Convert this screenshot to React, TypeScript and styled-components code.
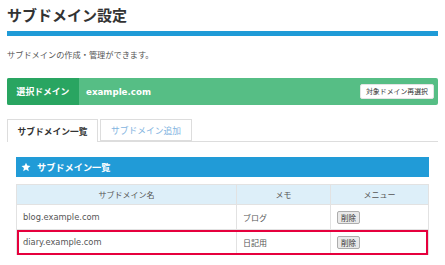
import React from "react";
import styled, { createGlobalStyle } from "styled-components";

const GlobalStyle = createGlobalStyle`
  html, body { margin: 0; padding: 0; background: #fff; }
  body {
    font-family: "DejaVu Sans", "Noto Sans CJK JP", sans-serif;
    color: #555;
    -webkit-font-smoothing: antialiased;
  }
`;

const Page = styled.div`
  width: 445px;
  height: 265px;
  box-sizing: border-box;
  padding: 0 7px;
  overflow: hidden;
`;

const Title = styled.h1`
  margin: 0;
  padding-top: 5px;
  font-family: "Noto Sans CJK JP", sans-serif;
  font-size: 15px;
  line-height: 20px;
  font-weight: 700;
  color: #333;
`;

const TitleBar = styled.div`
  margin-top: 6px;
  height: 5px;
  background: #1f9bd7;
`;

const Lead = styled.p`
  margin: 12px 0 0;
  font-family: "Noto Sans CJK JP", sans-serif;
  font-size: 8.2px;
  line-height: 12px;
  color: #555;
`;

const DomainBar = styled.div`
  margin-top: 18px;
  height: 27px;
  display: flex;
  align-items: center;
  background: #56be85;
  border-radius: 2px;
  overflow: hidden;
`;

const DomainLabel = styled.div`
  width: 72px;
  height: 100%;
  display: flex;
  align-items: center;
  justify-content: center;
  background: #29a561;
  color: #fff;
  font-family: "Noto Sans CJK JP", sans-serif;
  font-weight: 700;
  font-size: 8.8px;
`;

const DomainName = styled.div`
  margin-left: 7px;
  color: #fff;
  font-weight: 700;
  font-size: 8.7px;
`;

const ReselectButton = styled.button`
  margin-left: auto;
  margin-right: 4px;
  height: 15px;
  padding: 0 5px;
  background: #fff;
  border: 1px solid #e4e4e4;
  border-radius: 2px;
  color: #333;
  font-family: "Noto Sans CJK JP", sans-serif;
  font-size: 6.9px;
  line-height: 13px;
  cursor: pointer;
`;

const TabList = styled.div`
  margin-top: 14px;
  display: flex;
  gap: 2px;
  border-bottom: 1px solid #ddd;
  height: 22px;
`;

const Tab = styled.div<{ $active?: boolean }>`
  width: ${(p) => (p.$active ? "91px" : "92px")};
  box-sizing: border-box;
  height: ${(p) => (p.$active ? "23px" : "22px")};
  display: flex;
  align-items: center;
  justify-content: center;
  border: 1px solid #ddd;
  border-bottom: ${(p) => (p.$active ? "none" : "1px solid #ddd")};
  background: #fff;
  font-family: "Noto Sans CJK JP", sans-serif;
  font-size: 8.75px;
  font-weight: ${(p) => (p.$active ? 700 : 400)};
  color: ${(p) => (p.$active ? "#333" : "#84b5df")};
`;

const Panel = styled.div`
  padding: 15px 9px 0;
`;

const SectionHeader = styled.div`
  height: 20px;
  display: flex;
  align-items: center;
  gap: 6px;
  padding-left: 5px;
  background: #219bd7;
  color: #fff;
  font-family: "Noto Sans CJK JP", sans-serif;
  font-weight: 700;
  font-size: 9.2px;
`;

const Table = styled.div`
  margin-top: 7px;
  border: 1px solid #e2e2e2;
  border-bottom: none;
`;

const Row = styled.div<{ $head?: boolean; $marked?: boolean }>`
  display: grid;
  grid-template-columns: 219px 94px 1fr;
  height: ${(p) => (p.$head ? "20px" : "25px")};
  background: ${(p) => (p.$head ? "#ddeff9" : "#fff")};
  border-bottom: 1px solid #e2e2e2;
  box-sizing: border-box;
  outline: ${(p) => (p.$marked ? "2px solid #e6003d" : "none")};
  outline-offset: -2px;
`;

const Cell = styled.div<{ $head?: boolean; $cjk?: boolean }>`
  display: flex;
  align-items: center;
  justify-content: ${(p) => (p.$head ? "center" : "flex-start")};
  padding-left: ${(p) => (p.$head ? "0" : "6px")};
  border-left: 1px solid #e2e2e2;
  font-family: ${(p) =>
    p.$head || p.$cjk ? '"Noto Sans CJK JP", sans-serif' : '"DejaVu Sans", "Noto Sans CJK JP", sans-serif'};
  font-size: ${(p) => (p.$head || p.$cjk ? "8px" : "8.3px")};
  color: #555;
  &:first-child { border-left: none; }
`;

const DeleteButton = styled.button`
  height: 13px;
  padding: 0 3px;
  background: #e9e9e9;
  border: 1px solid #adadad;
  border-radius: 2px;
  color: #333;
  font-family: "Noto Sans CJK JP", sans-serif;
  font-size: 7.5px;
  line-height: 11px;
`;

const Star = () => (
  <svg width="10" height="10" viewBox="0 0 24 24" aria-hidden="true">
    <polygon
      fill="#fff"
      points="12,1.5 15.1,8.6 22.8,9.3 17,14.4 18.7,22 12,18 5.3,22 7,14.4 1.2,9.3 8.9,8.6"
    />
  </svg>
);

const rows = [
  { name: "blog.example.com", memo: "ブログ" },
  { name: "diary.example.com", memo: "日記用", marked: true },
];

export default function App() {
  return (
    <>
      <GlobalStyle />
      <Page>
        <Title>サブドメイン設定</Title>
        <TitleBar />
        <Lead>サブドメインの作成・管理ができます。</Lead>
        <DomainBar>
          <DomainLabel>選択ドメイン</DomainLabel>
          <DomainName>example.com</DomainName>
          <ReselectButton>対象ドメイン再選択</ReselectButton>
        </DomainBar>
        <TabList>
          <Tab $active>サブドメイン一覧</Tab>
          <Tab>サブドメイン追加</Tab>
        </TabList>
        <Panel>
          <SectionHeader>
            <Star />
            サブドメイン一覧
          </SectionHeader>
          <Table>
            <Row $head>
              <Cell $head>サブドメイン名</Cell>
              <Cell $head>メモ</Cell>
              <Cell $head>メニュー</Cell>
            </Row>
            {rows.map((r) => (
              <Row key={r.name} $marked={r.marked}>
                <Cell>{r.name}</Cell>
                <Cell $cjk>{r.memo}</Cell>
                <Cell>
                  <DeleteButton>削除</DeleteButton>
                </Cell>
              </Row>
            ))}
          </Table>
        </Panel>
      </Page>
    </>
  );
}
